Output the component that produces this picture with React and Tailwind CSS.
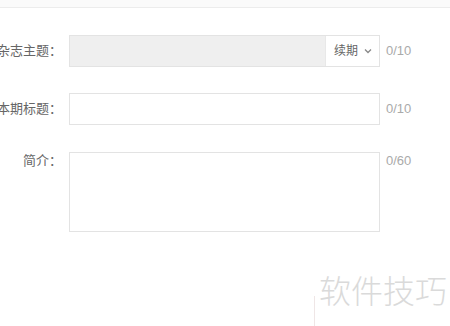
import React from "react";

const cjk = { fontFamily: '"Liberation Sans", "Noto Sans CJK SC", sans-serif' };

function Label({ children }) {
  return (
    <div className="w-[62px] shrink-0 flex justify-end mr-[7px] whitespace-nowrap text-[13px] leading-[16px] text-[#666]">
      <span>{children}</span>
    </div>
  );
}

function Count({ children }) {
  return (
    <div className="ml-[6px] text-[13px] leading-[16px] text-[#aaa]">{children}</div>
  );
}

export default function App() {
  return (
    <div className="relative w-[450px] h-[326px] bg-white overflow-hidden" style={cjk}>
      <div className="h-[8px] bg-[#fafafa] border-b border-[#ececec]" />
      <div className="pt-[27px] flex flex-col">
        <div className="flex items-center">
          <Label>杂志主题：</Label>
          <div className="w-[311px] h-[32px] flex border border-[#e3e3e3] bg-[#efefef]">
            <div className="flex-1" />
            <div className="w-[54px] bg-white border-l border-[#e8e8e8] flex items-center pl-[8px] gap-[6px] text-[12px] text-[#666]">
              <span>续期</span>
              <svg width="8" height="6" viewBox="0 0 8 6" fill="none">
                <path d="M1 1.5 L4 4.5 L7 1.5" stroke="#888" strokeWidth="1.3" />
              </svg>
            </div>
          </div>
          <Count>0/10</Count>
        </div>

        <div className="flex items-center mt-[26px]">
          <Label>本期标题：</Label>
          <div className="w-[311px] h-[32px] border border-[#e3e3e3] bg-white" />
          <Count>0/10</Count>
        </div>

        <div className="flex items-start mt-[27px]">
          <div className="pt-[1px] flex">
            <Label>简介：</Label>
          </div>
          <div className="w-[311px] h-[80px] border border-[#e3e3e3] bg-white" />
          <div className="pt-[1px]">
            <Count>0/60</Count>
          </div>
        </div>
      </div>

      <div className="absolute left-[314px] top-[296px] w-px h-[30px] bg-[#efe6e6]" />
      <div className="absolute left-[319px] top-[272px] text-[32px] leading-[40px] font-light text-[#dadada]">
        软件技巧
      </div>
    </div>
  );
}
